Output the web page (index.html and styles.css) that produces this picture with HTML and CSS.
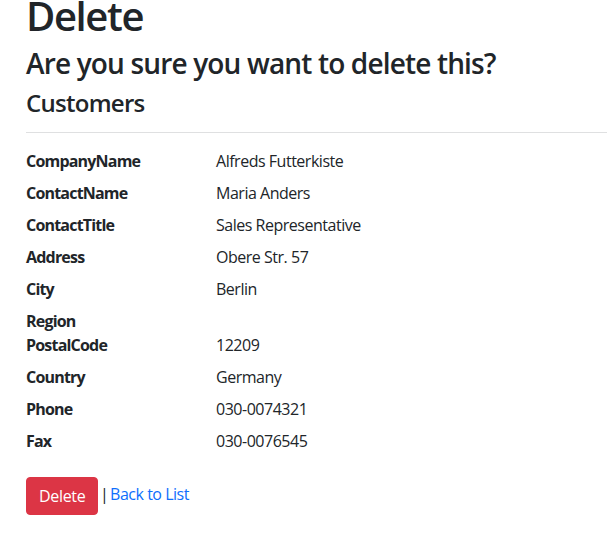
FILE: index.html
```html
<!DOCTYPE html>
<html lang="en">
<head>
<meta charset="utf-8">
<title>Delete</title>
<link rel="stylesheet" href="styles.css">
</head>
<body>
<main class="page">
  <h1 class="title">Delete</h1>
  <h3 class="question">Are you sure you want to delete this?</h3>
  <div class="details">
    <h4 class="entity">Customers</h4>
    <hr class="divider">
    <dl class="fields">
      <dt class="label">CompanyName</dt>
      <dd class="value">Alfreds Futterkiste</dd>
      <dt class="label">ContactName</dt>
      <dd class="value">Maria Anders</dd>
      <dt class="label">ContactTitle</dt>
      <dd class="value">Sales Representative</dd>
      <dt class="label">Address</dt>
      <dd class="value">Obere Str. 57</dd>
      <dt class="label">City</dt>
      <dd class="value">Berlin</dd>
      <dt class="label">Region</dt>
      <dd class="value"></dd>
      <dt class="label">PostalCode</dt>
      <dd class="value">12209</dd>
      <dt class="label">Country</dt>
      <dd class="value">Germany</dd>
      <dt class="label">Phone</dt>
      <dd class="value">030-0074321</dd>
      <dt class="label">Fax</dt>
      <dd class="value">030-0076545</dd>
    </dl>
    <form class="actions" onsubmit="return false;"><button type="submit" class="btn-danger">Delete</button> <span class="sep">|</span> <a class="back-link" href="#">Back to List</a></form>
  </div>
</main>
</body>
</html>
```

FILE: styles.css
```css
* {
  box-sizing: border-box;
}

html, body {
  margin: 0;
  padding: 0;
  background: #ffffff;
  overflow: hidden;
}

body {
  font-family: "Open Sans", "Noto Sans", sans-serif;
  font-size: 16px;
  line-height: 1.5;
  color: #212529;
  letter-spacing: -0.03em;
}

.page {
  padding-left: 26px;
  width: 1200px;
}

.title {
  font-size: 40px;
  font-weight: 600;
  line-height: 31px;
  letter-spacing: -0.035em;
  margin: 0 0 16px 0;
}

.question {
  font-size: 28px;
  font-weight: 600;
  line-height: 1.2;
  letter-spacing: -0.03em;
  margin: 0 0 8px 0;
}

.entity {
  font-size: 24px;
  font-weight: 600;
  line-height: 1.2;
  letter-spacing: -0.03em;
  margin: 0;
}

.divider {
  border: 0;
  border-top: 1px solid #dfe0e1;
  margin: 15px 0 16px 0;
}

.fields {
  display: grid;
  grid-template-columns: 190px 1fr;
  margin: 0 0 16px 0;
}

.label {
  font-weight: 700;
  letter-spacing: -0.05em;
  margin: 0;
}

.value {
  margin: 0 0 8px 0;
}

.actions {
  margin: 0;
  white-space: nowrap;
  word-spacing: -2px;
}

.btn-danger {
  font-family: inherit;
  font-size: 16px;
  line-height: 24px;
  letter-spacing: -0.02em;
  word-spacing: 0;
  color: #ffffff;
  background: #dc3545;
  border: 1px solid #dc3545;
  border-radius: 4px;
  padding: 6px 12px;
  cursor: pointer;
  vertical-align: middle;
}

.sep {
  color: #212529;
}

.back-link {
  color: #0d6efd;
  text-decoration: none;
  word-spacing: 0;
}
```
